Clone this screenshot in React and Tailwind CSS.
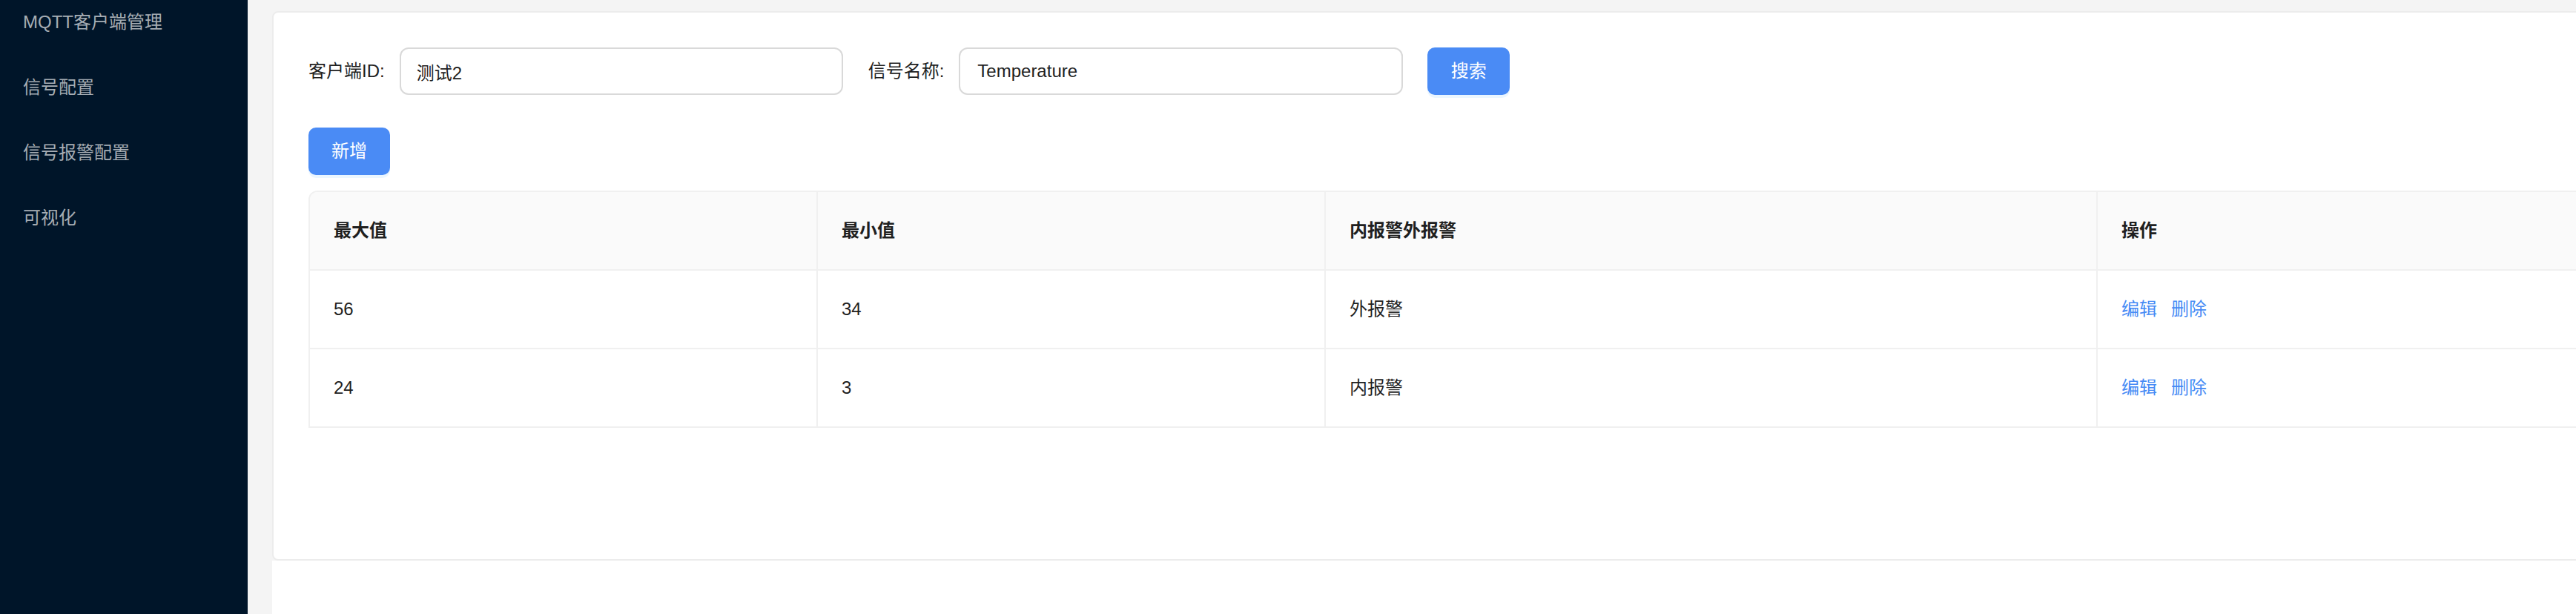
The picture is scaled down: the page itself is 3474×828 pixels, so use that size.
import React from "react";

const FONT = "font-['Liberation_Sans','Noto_Sans_CJK_SC',sans-serif]";

const menu = ["MQTT客户端管理", "信号配置", "信号报警配置", "可视化"];

const rows = [
  { max: "56", min: "34", type: "外报警" },
  { max: "24", min: "3", type: "内报警" },
];

function Cell({ children, head }) {
  return (
    <div
      className={
        "flex items-center px-[32px] border-r-2 border-b-2 border-[#f0f0f0] h-[106px] text-[24px] leading-none " +
        (head ? "bg-[#fafafa] font-semibold text-[#1f1f1f]" : "bg-white text-[#1f1f1f]")
      }
    >
      {children}
    </div>
  );
}

export default function App() {
  return (
    <div className={"flex w-[3474px] h-[828px] overflow-hidden " + FONT}>
      <aside className="w-[334px] shrink-0 bg-[#001529] overflow-hidden">
        <ul className="mt-[-14px]">
          {menu.map((m) => (
            <li
              key={m}
              className="h-[88px] flex items-center pl-[31px] text-[24px] leading-none text-[#a6adb4]"
            >
              {m}
            </li>
          ))}
        </ul>
      </aside>

      <main className="flex-1 min-w-0 overflow-hidden bg-[#f4f4f4] pl-[33px] pt-[15px]">
        <section className="w-[3300px] h-[741px] bg-white border-2 border-[#ececec] rounded-[8px] pl-[47px] pt-[47px]">
          <div className="flex items-center h-[64px]">
            <label className="text-[24px] leading-none text-[#1f1f1f] mr-[20px]">客户端ID:</label>
            <input
              readOnly
              value="测试2"
              className={"w-[598px] h-[64px] border-2 border-[#d9d9d9] rounded-[12px] px-[21px] text-[24px] text-[#1f1f1f] outline-none " + FONT}
            />
            <label className="ml-[34px] text-[24px] leading-none text-[#1f1f1f] mr-[20px]">信号名称:</label>
            <input
              readOnly
              value="Temperature"
              className={"w-[599px] h-[64px] border-2 border-[#d9d9d9] rounded-[12px] px-[23px] text-[24px] text-[#1f1f1f] outline-none " + FONT}
            />
            <button className="ml-[33px] w-[111px] h-[64px] rounded-[10px] bg-[#4a8bf5] text-white text-[24px] leading-none shadow-[0_4px_0_rgba(5,145,255,0.08)]">
              搜索
            </button>
          </div>

          <button className="mt-[44px] w-[110px] h-[64px] rounded-[10px] bg-[#4a8bf5] text-white text-[24px] leading-none shadow-[0_4px_0_rgba(5,145,255,0.08)]">
            新增
          </button>

          <div className="mt-[21px] grid grid-cols-[685px_685px_1041px_1fr] border-l-2 border-t-2 border-[#f0f0f0] rounded-tl-[12px] overflow-hidden">
            <Cell head>最大值</Cell>
            <Cell head>最小值</Cell>
            <Cell head>内报警外报警</Cell>
            <Cell head>操作</Cell>
            {rows.map((r, i) => (
              <React.Fragment key={i}>
                <Cell>{r.max}</Cell>
                <Cell>{r.min}</Cell>
                <Cell>{r.type}</Cell>
                <Cell>
                  <span className="text-[#468bf5]">编辑</span>
                  <span className="text-[#468bf5] ml-[19px]">删除</span>
                </Cell>
              </React.Fragment>
            ))}
          </div>
        </section>
        <div className="w-[3300px] h-[200px] bg-white"></div>
      </main>
    </div>
  );
}
